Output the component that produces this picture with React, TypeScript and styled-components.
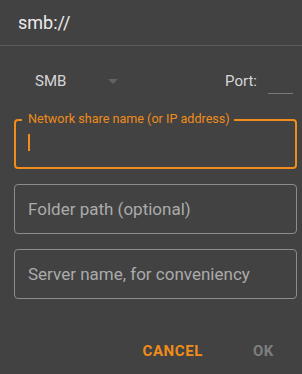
import styled, { createGlobalStyle } from 'styled-components';

const GlobalStyle = createGlobalStyle`
  html, body {
    margin: 0;
    padding: 0;
    background: #424242;
  }
  body {
    font-family: Roboto, "Liberation Sans", sans-serif;
    -webkit-font-smoothing: antialiased;
  }
`;

const Dialog = styled.div`
  width: 302px;
  height: 374px;
  background: #424242;
  overflow: hidden;
`;

const Title = styled.div`
  height: 45px;
  display: flex;
  align-items: center;
  padding-left: 18px;
  font-size: 18px;
  color: #ececec;
  border-bottom: 1px solid #5c5c5c;
`;

const OptionsRow = styled.div`
  height: 44px;
  margin-top: 13px;
  display: flex;
  align-items: center;
`;

const Select = styled.div`
  display: flex;
  align-items: center;
  padding-left: 35px;
  width: 100px;
  font-size: 15px;
  color: #d6d6d6;

  svg {
    margin-left: 42px;
  }
`;

const PortLabel = styled.div`
  margin-left: auto;
  font-size: 15px;
  color: #d6d6d6;
`;

const PortInput = styled.div`
  width: 25px;
  height: 34px;
  margin: 0 9px 0 11px;
  border-bottom: 1px solid #7a7a7a;
  align-self: flex-start;
`;

const Fields = styled.div`
  margin-top: 16px;
  padding: 0 5px 0 14px;
  display: flex;
  flex-direction: column;
  gap: 15px;
`;

const Field = styled.div<{ focused?: boolean }>`
  position: relative;
  height: 50px;
  box-sizing: border-box;
  border: ${({ focused }) => (focused ? '2px solid #ef8c1a' : '1px solid #8c8c8c')};
  border-radius: 4px;
  display: flex;
  align-items: center;
  padding-left: ${({ focused }) => (focused ? '12px' : '13px')};
`;

const FloatLabel = styled.span`
  position: absolute;
  left: 6px;
  top: -9px;
  padding: 0 4px 0 6px;
  background: #424242;
  font-size: 12.6px;
  line-height: 14px;
  color: #ef8c1a;
`;

const Cursor = styled.span`
  width: 2px;
  height: 17px;
  margin-top: -4px;
  background: #ef8c1a;
`;

const Placeholder = styled.span`
  font-size: 17px;
  color: #ababab;
`;

const Actions = styled.div`
  margin-top: 34px;
  height: 36px;
  display: flex;
  align-items: center;
  justify-content: flex-end;
  padding-right: 28px;
  gap: 50px;
`;

const ActionButton = styled.button<{ primary?: boolean }>`
  background: none;
  border: none;
  padding: 0;
  font-family: Roboto, "Liberation Sans", sans-serif;
  font-size: 15px;
  font-weight: 700;
  letter-spacing: 0.6px;
  color: ${({ primary }) => (primary ? '#ef8c1a' : '#7e7e7e')};
`;

export default function App() {
  return (
    <Dialog>
      <GlobalStyle />
      <Title>smb://</Title>
      <OptionsRow>
        <Select>
          SMB
          <svg width="10" height="5" viewBox="0 0 10 5">
            <path d="M0 0 L10 0 L5 5 Z" fill="#626262" />
          </svg>
        </Select>
        <PortLabel>Port:</PortLabel>
        <PortInput />
      </OptionsRow>
      <Fields>
        <Field focused>
          <FloatLabel>Network share name (or IP address)</FloatLabel>
          <Cursor />
        </Field>
        <Field>
          <Placeholder>Folder path (optional)</Placeholder>
        </Field>
        <Field>
          <Placeholder>Server name, for conveniency</Placeholder>
        </Field>
      </Fields>
      <Actions>
        <ActionButton primary>CANCEL</ActionButton>
        <ActionButton>OK</ActionButton>
      </Actions>
    </Dialog>
  );
}
